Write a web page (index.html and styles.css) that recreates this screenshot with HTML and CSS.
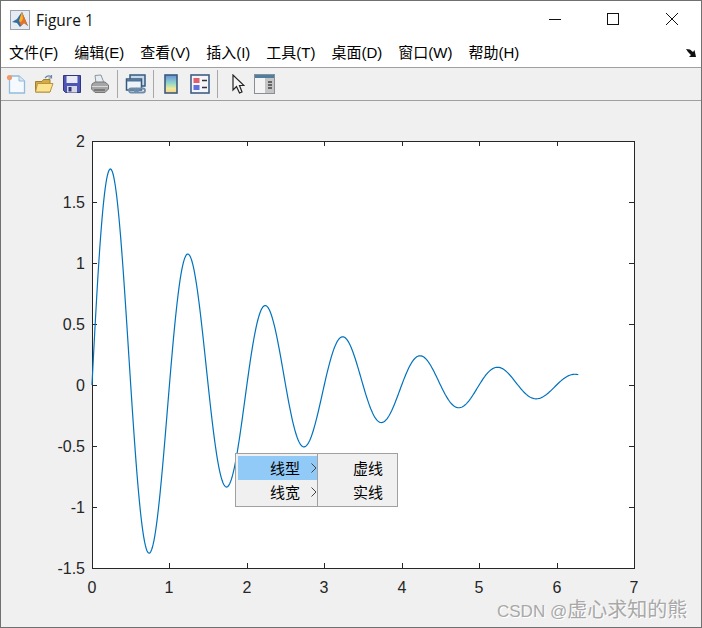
FILE: index.html
```html
<!DOCTYPE html>
<html lang="zh-CN">
<head>
  <meta charset="UTF-8">
  <title>Figure 1</title>
  <link rel="stylesheet" href="styles.css">
</head>
<body>
  <div class="window">
    <div class="titlebar">
      <svg class="app-icon" width="20" height="20" viewBox="0 0 20 20">
        <rect x="0.5" y="0.5" width="19" height="19" fill="#e6ecf2" stroke="#9aa3ad"/>
        <path d="M2 12 L7 9 L9 6 L12 2 L15 9 L18 16 L14 13 L10 17 L7 13 Z" fill="#2f6ea5"/>
        <path d="M9 11 L12 2 L15 9 L18 16 L14 13 L11 16 Z" fill="#e8702a"/>
        <path d="M12 2 L13 9 L11 12 L9 11 Z" fill="#f4b42c"/>
      </svg>
      <span class="title">Figure 1</span>
      <div class="win-buttons">
        <svg width="58" height="20" viewBox="0 0 58 20"><path d="M23 9.5 H35" stroke="#111"/></svg>
        <svg width="58" height="20" viewBox="0 0 58 20"><rect x="23.5" y="3.5" width="11" height="11" fill="none" stroke="#111"/></svg>
        <svg width="59" height="20" viewBox="0 0 59 20"><path d="M24 3 L36 15 M36 3 L24 15" stroke="#111"/></svg>
      </div>
    </div>

    <div class="menubar">
      <span>文件(F)</span>
      <span>编辑(E)</span>
      <span>查看(V)</span>
      <span>插入(I)</span>
      <span>工具(T)</span>
      <span>桌面(D)</span>
      <span>窗口(W)</span>
      <span>帮助(H)</span>
      <svg class="dock" width="10" height="8" viewBox="0 0 10 8"><path d="M0 0 L4 0.5 L7 3 L8.5 1 L10 8 L3 8 L5 6 L2 3 Z" fill="#111"/></svg>
    </div>

    <div class="toolbar">
      <svg class="tool" width="20" height="20" viewBox="0 0 20 20">
        <path d="M3.5 2 H13 L18.5 7 V19 H3.5 Z" fill="#f4faff" stroke="#93bbdc" stroke-width="1.3"/>
        <path d="M13 2 V7 H18.5" fill="#d5e6f5" stroke="#93bbdc"/>
        <circle cx="3.5" cy="3.5" r="2.6" fill="#ee9a6c"/>
      </svg>
      <svg class="tool" width="20" height="20" viewBox="0 0 20 20">
        <path d="M1.5 7.5 H8 L9.5 5.5 H16 V18 H1.5 Z" fill="#d6aa47" stroke="#a07f2c"/>
        <path d="M1.5 18 L3.5 9.5 H19 L16 18 Z" fill="#fbe38f" stroke="#b8963a"/>
        <path d="M11 4 Q14 0.5 17.5 3 M17.5 1 V4 H14.5" fill="none" stroke="#6b87a8" stroke-width="1.2"/>
      </svg>
      <svg class="tool" width="20" height="20" viewBox="0 0 20 20">
        <path d="M1.5 1.5 H18.5 V18.5 H3.5 L1.5 16.5 Z" fill="#4d55b5" stroke="#30367f"/>
        <rect x="4.5" y="2" width="11" height="7" fill="#e8eaf8"/>
        <rect x="5" y="12" width="10" height="6.5" fill="#d5d7e4"/>
        <rect x="6.5" y="13" width="3" height="4.5" fill="#30367f"/>
      </svg>
      <svg class="tool tool-last" width="20" height="20" viewBox="0 0 20 20">
        <path d="M5 1.5 L11 1 L14 9 H6 Z" fill="#e6edf3" stroke="#8d969d"/>
        <path d="M2 10 L5 8 H15 L18.5 11 V15 L15 18.5 H5 L1.5 15 Z" fill="#a6a6a6" stroke="#777"/>
        <path d="M2 12.5 H18" stroke="#d9d9d9"/>
        <path d="M4 16 H15" stroke="#6a6a6a" stroke-width="1.5"/>
      </svg>
      <i class="sep"></i>
      <svg class="tool tool-link" width="22" height="20" viewBox="0 0 22 20">
        <rect x="5" y="1" width="15" height="11" fill="#c9d8e8" stroke="#35597f" stroke-width="1.5"/>
        <rect x="1.5" y="5" width="15" height="11" fill="#eef3f8" stroke="#35597f" stroke-width="1.5"/>
        <rect x="2" y="5.5" width="14" height="2" fill="#4d7398"/>
        <path d="M6 14.5 H11 a2 2 0 0 1 0 4 H6 a2 2 0 0 1 0 -4 M12 14.5 H18 a2 2 0 0 1 0 4 H12 a2 2 0 0 1 0 -4" fill="none" stroke="#6f8dab" stroke-width="1.8"/>
      </svg>
      <i class="sep sep-wide"></i>
      <svg class="tool tool-bar" width="14" height="20" viewBox="0 0 14 20">
        <defs>
          <linearGradient id="parula" x1="0" y1="0" x2="0" y2="1">
            <stop offset="0" stop-color="#6b8fd8"/>
            <stop offset="0.45" stop-color="#8fd6cc"/>
            <stop offset="0.75" stop-color="#eee89a"/>
            <stop offset="1" stop-color="#f8d08a"/>
          </linearGradient>
        </defs>
        <rect x="1" y="1" width="12" height="18" fill="url(#parula)" stroke="#3c5a7c" stroke-width="1.6"/>
      </svg>
      <svg class="tool tool-last" width="20" height="20" viewBox="0 0 20 20">
        <rect x="1" y="1" width="18" height="18" fill="#f4f6fa" stroke="#3f5f86" stroke-width="1.6"/>
        <rect x="3.5" y="4" width="6" height="5" fill="#e0606a"/>
        <rect x="3.5" y="11" width="6" height="5" fill="#5f6fe0"/>
        <path d="M12 6.5 H17 M12 13.5 H17" stroke="#333" stroke-width="1.4"/>
      </svg>
      <i class="sep sep-cursor"></i>
      <svg class="tool tool-cursor" width="13" height="20" viewBox="0 0 13 20">
        <path d="M1 1 V16 L4.5 12.5 L7.5 19 L10 18 L7.5 11.5 H12 Z" fill="#f5f5f5" stroke="#222" stroke-width="1.2"/>
      </svg>
      <svg class="tool" width="21" height="20" viewBox="0 0 21 20">
        <rect x="0.5" y="0.5" width="20" height="19" fill="#f4f4f4" stroke="#8a8f94"/>
        <rect x="1" y="1" width="19" height="3" fill="#4f7fa0"/>
        <rect x="11" y="4" width="9" height="15" fill="#c4c4c4"/>
        <path d="M14 8 H18 M14 11 H18 M14 14 H18" stroke="#444" stroke-width="1.3"/>
      </svg>
    </div>

    <div class="figure">
      <svg id="plot" width="700" height="526" viewBox="1 101 700 526"></svg>

      <div class="context-menu">
        <div class="menu-main">
          <div class="menu-item active">
            <span>线型</span>
            <svg class="chevron" width="6" height="10" viewBox="0 0 6 10"><path d="M0.5 0.5 L5 5 L0.5 9.5" fill="none" stroke="#444"/></svg>
          </div>
          <div class="menu-item">
            <span>线宽</span>
            <svg class="chevron" width="6" height="10" viewBox="0 0 6 10"><path d="M0.5 0.5 L5 5 L0.5 9.5" fill="none" stroke="#444"/></svg>
          </div>
        </div>
        <div class="menu-sub">
          <div class="menu-item"><span>虚线</span></div>
          <div class="menu-item"><span>实线</span></div>
        </div>
      </div>

      <div class="watermark">CSDN @<span>虚心求知的熊</span></div>
    </div>
  </div>

  <script src="plot.js"></script>
</body>
</html>
```

FILE: styles.css
```css
* {
  box-sizing: border-box;
}
html, body {
  margin: 0;
  padding: 0;
}
body {
  width: 702px;
  height: 628px;
  overflow: hidden;
  background: #fff;
  color: #000;
  font-family: "Noto Sans CJK SC", "Liberation Sans", sans-serif;
}
.window {
  width: 702px;
  height: 628px;
  display: flex;
  flex-direction: column;
  border: 1px solid #707070;
}
.titlebar {
  height: 38px;
  display: flex;
  align-items: center;
  padding-left: 9px;
}
.app-icon {
  margin-right: 6px;
}
.title {
  font-family: "Open Sans", "Liberation Sans", sans-serif;
  font-size: 15.5px;
  color: #111;
}
.win-buttons {
  margin-left: auto;
  display: flex;
}
.menubar {
  height: 29px;
  display: flex;
  align-items: center;
  gap: 16px;
  padding: 0 4px 0 8px;
  font-size: 15px;
  line-height: 20px;
  border-bottom: 1px solid #a0a0a0;
}
.menubar span {
  font-family: "Liberation Sans", "Noto Sans CJK SC", sans-serif;
}
.dock {
  margin-left: auto;
  margin-right: 1px;
}
.toolbar {
  height: 33px;
  display: flex;
  align-items: center;
  padding-left: 5px;
  background: #f0f0f0;
  border-bottom: 1px solid #a0a0a0;
}
.tool {
  margin-right: 8px;
  flex: none;
}
.tool-last {
  margin-right: 7px;
}
.tool-link {
  margin-right: 6px;
}
.tool-bar {
  margin-right: 12px;
}
.tool-cursor {
  margin-right: 9px;
}
.sep {
  width: 1px;
  height: 28px;
  background: #a8a8a8;
  margin-right: 7px;
  flex: none;
}
.sep-wide {
  margin-right: 10px;
}
.sep-cursor {
  margin-right: 14px;
}
.figure {
  position: relative;
  flex: 1;
  background: #f0f0f0;
}
#plot {
  display: block;
}
.tick-label {
  font-family: "Liberation Sans", sans-serif;
  font-size: 16px;
  fill: #262626;
}
.context-menu {
  position: absolute;
  left: 234px;
  top: 352px;
  display: flex;
  font-size: 15px;
  line-height: 24px;
}
.menu-main, .menu-sub {
  height: 54px;
  padding: 2px;
  background: #f0f0f0;
  border: 1px solid #a0a0a0;
}
.menu-main {
  width: 83px;
  padding-right: 0;
}
.menu-sub {
  width: 81px;
  margin-left: -1px;
  padding-left: 0;
}
.menu-item {
  height: 24px;
  position: relative;
  padding-left: 32px;
}
.menu-sub .menu-item {
  padding-left: 35px;
}
.chevron {
  position: absolute;
  right: 0;
  top: 7px;
}
.menu-item.active {
  background: #91c9f7;
}
.watermark {
  position: absolute;
  left: 496px;
  top: 498px;
  font-family: "Liberation Sans", "Noto Sans CJK SC", sans-serif;
  font-size: 17px;
  line-height: 20px;
  color: #a8a8a8;
  text-shadow: 1px 1px 0 #fff;
  white-space: nowrap;
}
.watermark span {
  font-family: "Noto Sans CJK SC", sans-serif;
  font-size: 20px;
}
```

FILE: plot.js
```js
var svgNS = "http://www.w3.org/2000/svg";
var plot = document.getElementById("plot");

// axes box, in page pixels
var left = 92, right = 634, top_ = 141, bottom = 568;
var xMax = 7, yMax = 2, yMin = -1.5;

function px(x) {
  return left + (x / xMax) * (right - left);
}
function py(y) {
  return top_ + ((yMax - y) / (yMax - yMin)) * (bottom - top_);
}

function add(name, attrs, text) {
  var el = document.createElementNS(svgNS, name);
  for (var k in attrs) el.setAttribute(k, attrs[k]);
  if (text) el.textContent = text;
  plot.appendChild(el);
  return el;
}

add("rect", { x: left + 0.5, y: top_ + 0.5, width: right - left, height: bottom - top_, fill: "#fff", stroke: "#262626" });

var ticks = "";
for (var i = 0; i <= xMax; i++) {
  var x = Math.round(px(i)) + 0.5;
  ticks += "M" + x + " " + bottom + "v-5M" + x + " " + top_ + "v5";
  add("text", { x: x - 0.5, y: bottom + 25, "text-anchor": "middle", "class": "tick-label" }, String(i));
}
for (var v = yMin; v <= yMax; v += 0.5) {
  var y = Math.round(py(v)) + 0.5;
  ticks += "M" + left + " " + y + "h5M" + right + " " + y + "h-5";
  add("text", { x: left - 7, y: y + 5.5, "text-anchor": "end", "class": "tick-label" }, String(v));
}
add("path", { d: ticks, stroke: "#262626", fill: "none" });

// y = 2 exp(-t/2) sin(2 pi t)
var d = "";
for (var t = 0; t <= 2 * Math.PI; t += 0.01) {
  var val = 2 * Math.exp(-0.5 * t) * Math.sin(2 * Math.PI * t);
  d += (d ? "L" : "M") + px(t).toFixed(2) + " " + py(val).toFixed(2);
}
add("path", { d: d, stroke: "#0072bd", "stroke-width": 1.2, fill: "none" });
```
